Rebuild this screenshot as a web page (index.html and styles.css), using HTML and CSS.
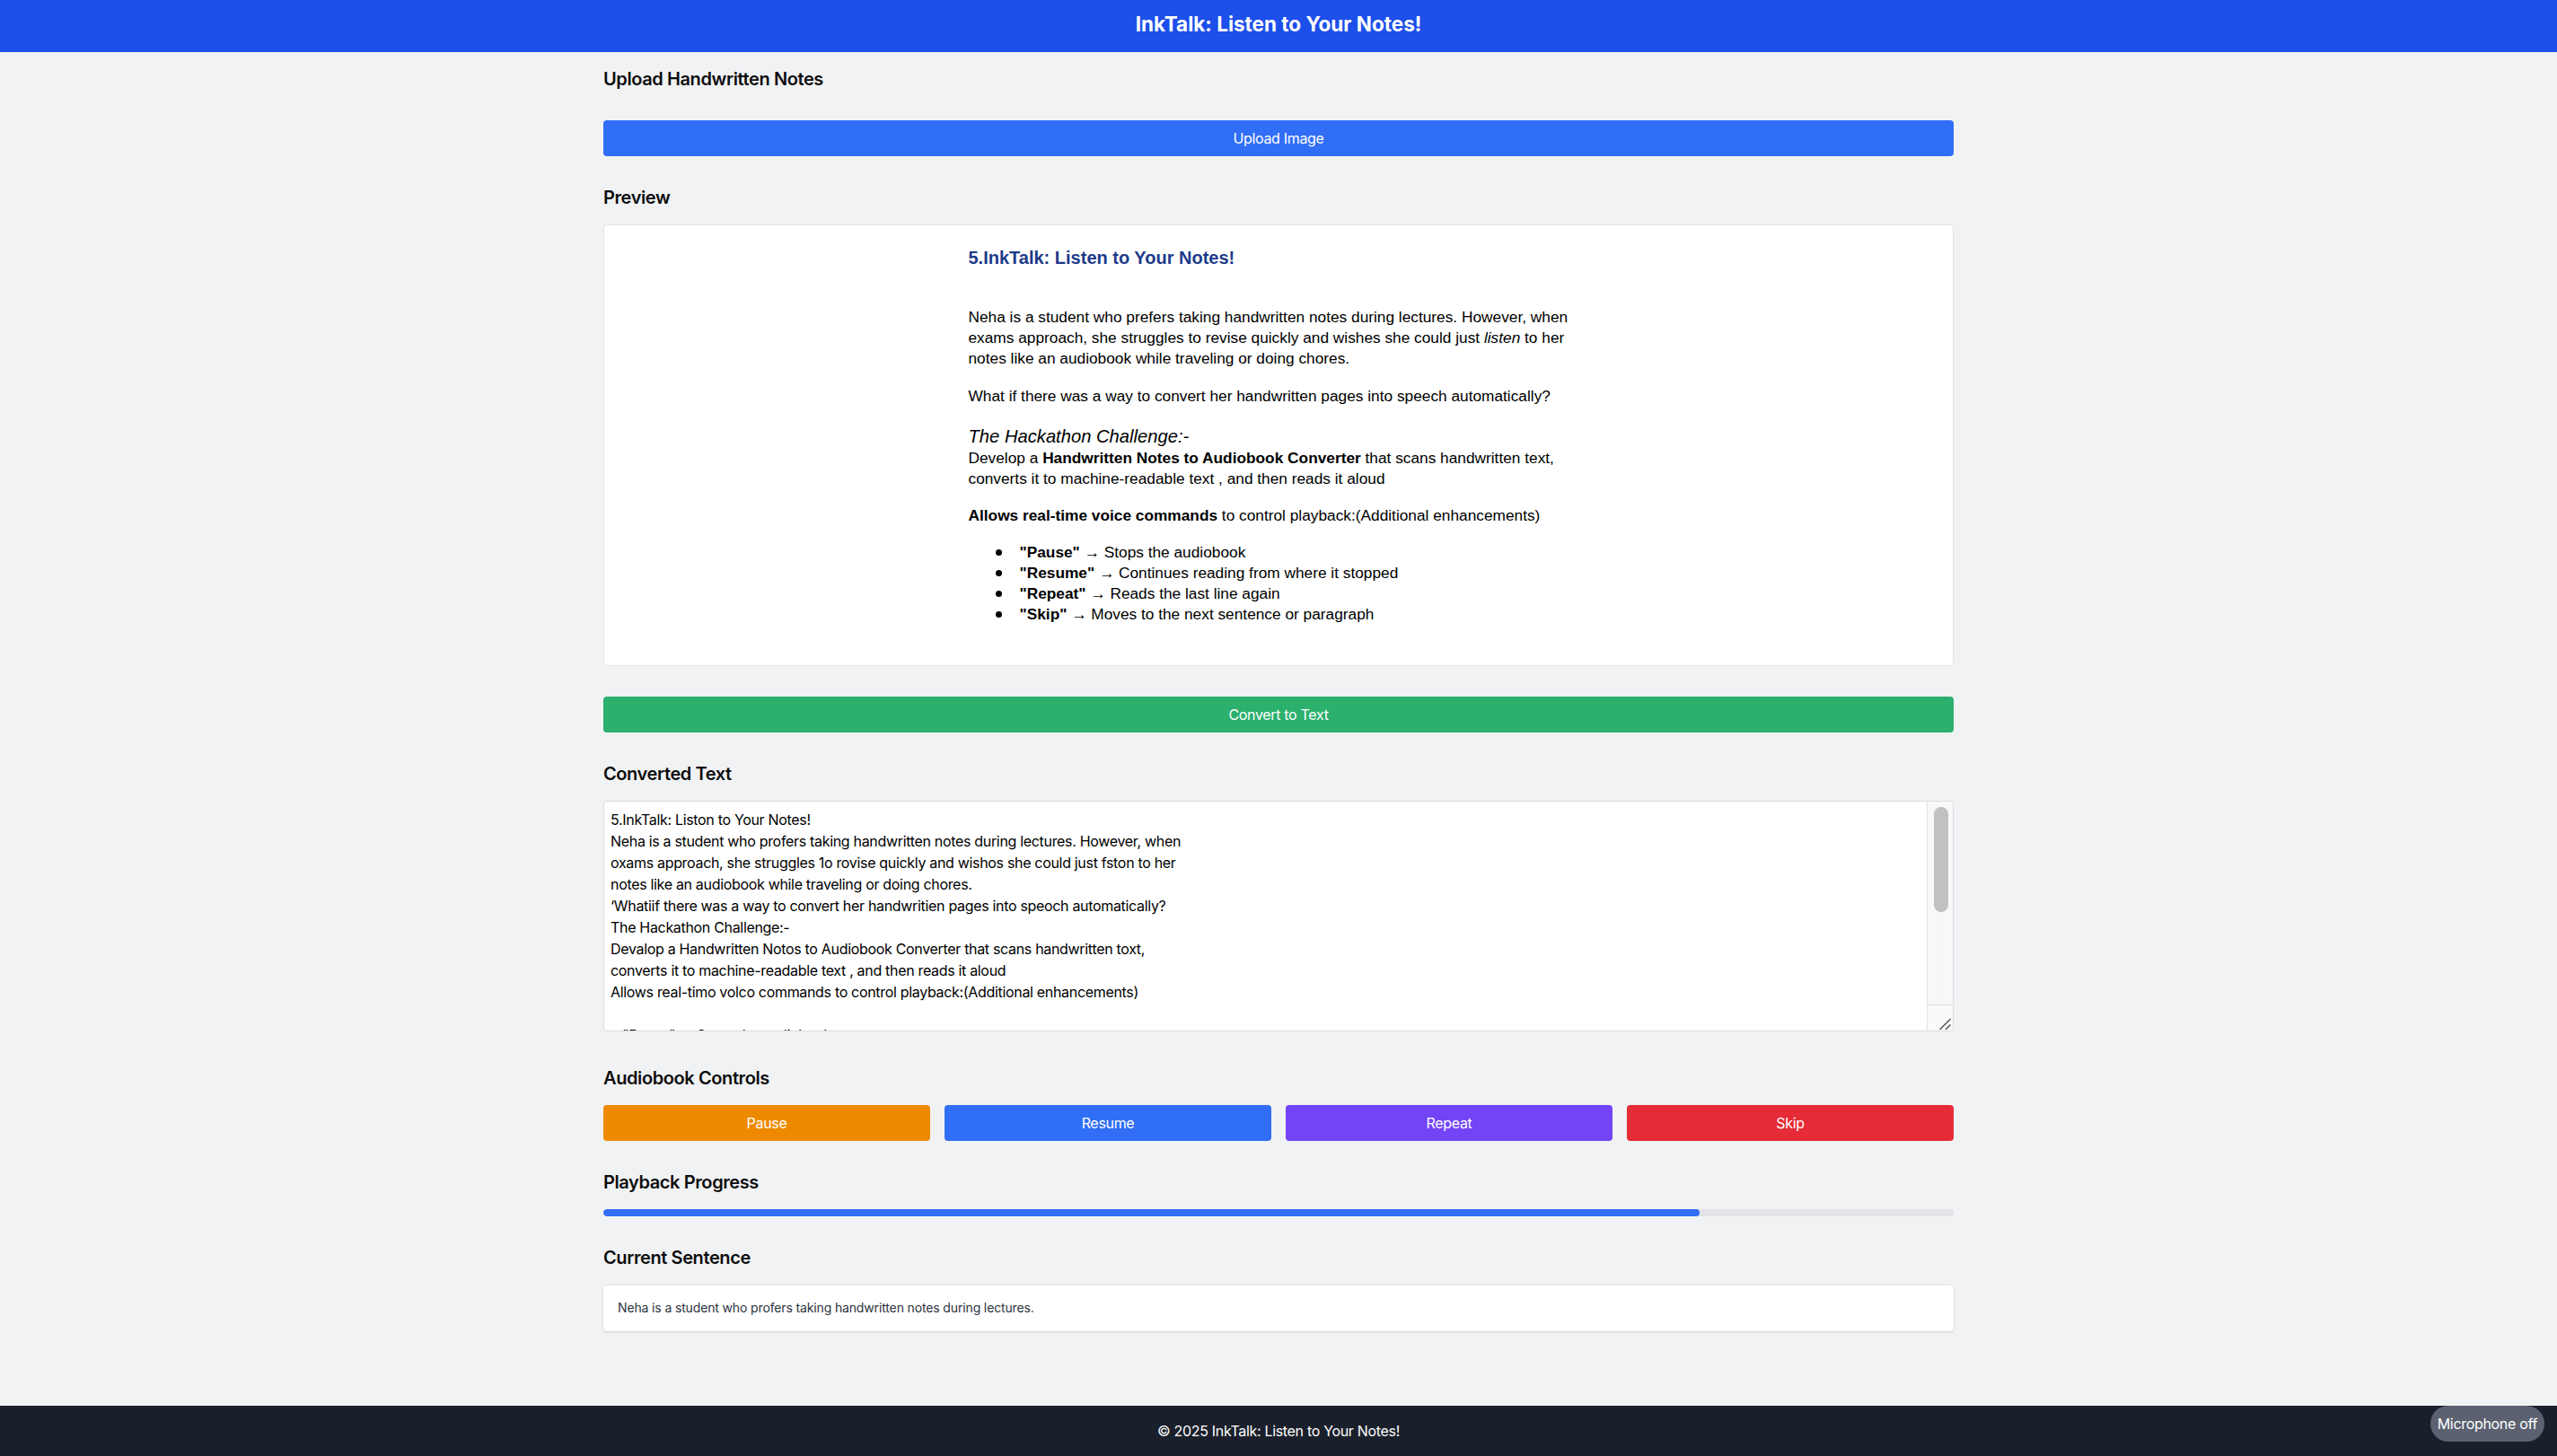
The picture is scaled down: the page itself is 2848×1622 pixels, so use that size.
FILE: index.html
```html
<!DOCTYPE html>
<html lang="en">
<head>
<meta charset="utf-8">
<title>InkTalk: Listen to Your Notes!</title>
<link rel="stylesheet" href="styles.css">
</head>
<body>
<header class="topbar">
  <h1 class="topbar-title">InkTalk: Listen to Your Notes!</h1>
</header>

<main class="main">
  <section class="section">
    <h2 class="section-title section-title-upload">Upload Handwritten Notes</h2>
    <button class="btn btn-blue">Upload Image</button>
  </section>

  <section class="section section-preview">
    <h2 class="section-title">Preview</h2>
    <div class="preview-box">
      <div class="doc">
        <div class="doc-title">5.InkTalk: Listen to Your Notes!</div>
        <p class="doc-p doc-p1">Neha is a student who prefers taking handwritten notes during lectures. However, when exams approach, she struggles to revise quickly and wishes she could just <i>listen</i> to her notes like an audiobook while traveling or doing chores.</p>
        <p class="doc-p doc-p2">What if there was a way to convert her handwritten pages into speech automatically?</p>
        <div class="doc-sub">The Hackathon Challenge:-</div>
        <p class="doc-p doc-p3">Develop a <b>Handwritten Notes to Audiobook Converter</b> that scans handwritten text, converts it to machine-readable text , and then reads it aloud</p>
        <p class="doc-p doc-p4"><b>Allows real-time voice commands</b> to control playback:(Additional enhancements)</p>
        <ul class="doc-list">
          <li class="doc-item"><span><b>"Pause"</b> → Stops the audiobook</span></li>
          <li class="doc-item"><span><b>"Resume"</b> → Continues reading from where it stopped</span></li>
          <li class="doc-item"><span><b>"Repeat"</b> → Reads the last line again</span></li>
          <li class="doc-item"><span><b>"Skip"</b> → Moves to the next sentence or paragraph</span></li>
        </ul>
      </div>
    </div>
  </section>

  <section class="section">
    <button class="btn btn-green">Convert to Text</button>
  </section>

  <section class="section section-converted">
    <h2 class="section-title">Converted Text</h2>
    <div class="textarea-wrap">
      <textarea class="converted" spellcheck="false">5.InkTalk: Liston to Your Notes!
Neha is a student who profers taking handwritten notes during lectures. However, when
oxams approach, she struggles 1o rovise quickly and wishos she could just fston to her
notes like an audiobook while traveling or doing chores.
‘Whatiif there was a way to convert her handwritien pages into speoch automatically?
The Hackathon Challenge:-
Devalop a Handwritten Notos to Audiobook Converter that scans handwritten toxt,
converts it to machine-readable text , and then reads it aloud
Allows real-timo volco commands to control playback:(Additional enhancements)

e "Pause" — Stops the audiobook
e "Resume" — Continues reading from where it stopped
e "Repeat" — Reads the last line again
e "Skip" — Moves to the next sentence or paragraph</textarea>
      <div class="fake-scrollbar" aria-hidden="true">
        <div class="fake-track"><div class="fake-thumb"></div></div>
        <div class="fake-corner">
          <svg class="grip" width="28" height="28" viewBox="0 0 28 28">
            <line x1="13.5" y1="27" x2="25.5" y2="15" stroke="#505050" stroke-width="1.4"/>
            <line x1="20" y1="27" x2="25.5" y2="21.5" stroke="#505050" stroke-width="1.4"/>
          </svg>
        </div>
      </div>
    </div>
  </section>

  <section class="section">
    <h2 class="section-title">Audiobook Controls</h2>
    <div class="controls">
      <button class="btn btn-orange">Pause</button>
      <button class="btn btn-blue">Resume</button>
      <button class="btn btn-violet">Repeat</button>
      <button class="btn btn-red">Skip</button>
    </div>
  </section>

  <section class="section">
    <h2 class="section-title">Playback Progress</h2>
    <div class="progress"><div class="progress-fill" style="width: 81.2%"></div></div>
  </section>

  <section class="section">
    <h2 class="section-title">Current Sentence</h2>
    <div class="sentence-box">Neha is a student who profers taking handwritten notes during lectures.</div>
  </section>
</main>

<footer class="footer">© 2025 InkTalk: Listen to Your Notes!</footer>

<div class="mic-pill">Microphone off</div>
</body>
</html>
```

FILE: styles.css
```css
* { box-sizing: border-box; }

html, body { margin: 0; padding: 0; }

body {
  font-family: Inter, "Noto Sans", sans-serif;
  background: #f1f2f4;
  color: #111;
  min-height: 100vh;
  display: flex;
  flex-direction: column;
}

.topbar {
  background: #1d4fea;
  height: 58px;
  display: flex;
  align-items: center;
  justify-content: center;
  padding-bottom: 4px;
}

.topbar-title {
  margin: 0;
  color: #fff;
  font-size: 22.5px;
  font-weight: 700;
  line-height: 28px;
  letter-spacing: 0;
}

.main {
  flex: 1;
  width: 1504px;
  margin: 0 auto;
  padding-top: 16px;
}

.section { margin-bottom: 32px; }
.section-preview { margin-bottom: 34px; }
.section-converted { margin-bottom: 38px; }

.section-title {
  margin: 0 0 16px 0;
  font-size: 20px;
  line-height: 28px;
  font-weight: 600;
  color: #0d0d0d;
  letter-spacing: -0.02em;
}
.section-title-upload { margin-bottom: 32px; }

.btn {
  display: block;
  width: 100%;
  height: 40px;
  border: none;
  border-radius: 4px;
  color: #fff;
  font-family: Inter, "Noto Sans", sans-serif;
  font-size: 16px;
  letter-spacing: -0.02em;
  padding: 0;
  cursor: pointer;
}
.btn-blue { background: #306ef6; }
.btn-green { background: #2bb06d; }
.btn-orange { background: #ee8a00; }
.btn-violet { background: #7344f6; }
.btn-red { background: #e42b37; }

.controls {
  display: grid;
  grid-template-columns: repeat(4, 1fr);
  gap: 16px;
}

/* Preview */
.preview-box {
  background: #fff;
  border: 1px solid #e2e3e7;
  border-radius: 4px;
  height: 492px;
  padding-top: 24px;
}

.doc {
  width: 691px;
  margin: 0 auto;
  font-family: "Liberation Sans", Arial, sans-serif;
  color: #000;
  font-size: 17.3px;
  line-height: 23px;
}

.doc-title {
  font-size: 20px;
  line-height: 24px;
  font-weight: 700;
  color: #1d3a89;
  margin-bottom: 43px;
}

.doc-p { margin: 0; }
.doc-p1 { margin-bottom: 19px; }
.doc-p2 { margin-bottom: 20px; }
.doc-p3 { margin-bottom: 18px; }
.doc-p4 { margin-bottom: 18px; }

.doc-sub {
  font-size: 20.2px;
  line-height: 26px;
  font-style: italic;
}

.doc-list {
  list-style: none;
  margin: 0;
  padding: 0 0 0 30px;
}
.doc-item {
  display: flex;
  align-items: center;
}
.doc-item::before {
  content: "";
  width: 7px;
  height: 7px;
  border-radius: 50%;
  background: #000;
  margin-right: 20px;
  flex: none;
}

/* Converted text */
.textarea-wrap {
  position: relative;
}

.converted {
  display: block;
  width: 100%;
  height: 257px;
  margin: 0;
  padding: 8px 36px 8px 7px;
  border: 1px solid #dcdde1;
  border-radius: 4px;
  background: #fff;
  color: #000;
  font-family: Inter, "Noto Sans", sans-serif;
  font-size: 16px;
  line-height: 24px;
  letter-spacing: -0.02em;
  overflow: hidden;
  resize: none;
  white-space: pre;
}

.fake-scrollbar {
  position: absolute;
  top: 1px;
  right: 1px;
  bottom: 1px;
  width: 29px;
  display: flex;
  flex-direction: column;
  border-radius: 0 3px 3px 0;
  overflow: hidden;
}
.fake-track {
  flex: 1;
  background: #f8f8f8;
  border-left: 1px solid #e4e4e4;
  padding: 6px 6px 0 7px;
}
.fake-thumb {
  width: 16px;
  height: 117px;
  border-radius: 8px;
  background: #c1c1c1;
}
.fake-corner {
  height: 29px;
  background: #fafafa;
  border-top: 1px solid #dedede;
  border-left: 1px solid #e4e4e4;
  display: flex;
  align-items: flex-end;
  justify-content: flex-end;
}
.grip { display: block; }

/* Progress */
.progress {
  height: 8px;
  background: #e2e3e7;
  border-radius: 4px;
  overflow: hidden;
}
.progress-fill {
  height: 100%;
  background: #306ef6;
  border-radius: 4px;
}

/* Current sentence */
.sentence-box {
  background: #fff;
  border-radius: 4px;
  border-top: 1px solid #e3e4e8;
  box-shadow: 0 1px 3px rgba(0,0,0,0.10), 0 1px 2px rgba(0,0,0,0.06);
  padding: 15px 16px 16px;
  font-size: 14px;
  line-height: 20px;
  color: #2d3340;
  letter-spacing: -0.01em;
}

.footer {
  background: #1a202b;
  color: #fff;
  height: 56px;
  display: flex;
  align-items: center;
  justify-content: center;
  font-size: 16px;
  letter-spacing: -0.02em;
}

.mic-pill {
  position: fixed;
  right: 14px;
  bottom: 16px;
  height: 40px;
  padding: 0 8px;
  border-radius: 20px;
  background: #5b6171;
  color: #fff;
  font-size: 16px;
  letter-spacing: -0.02em;
  display: flex;
  align-items: center;
}
```
